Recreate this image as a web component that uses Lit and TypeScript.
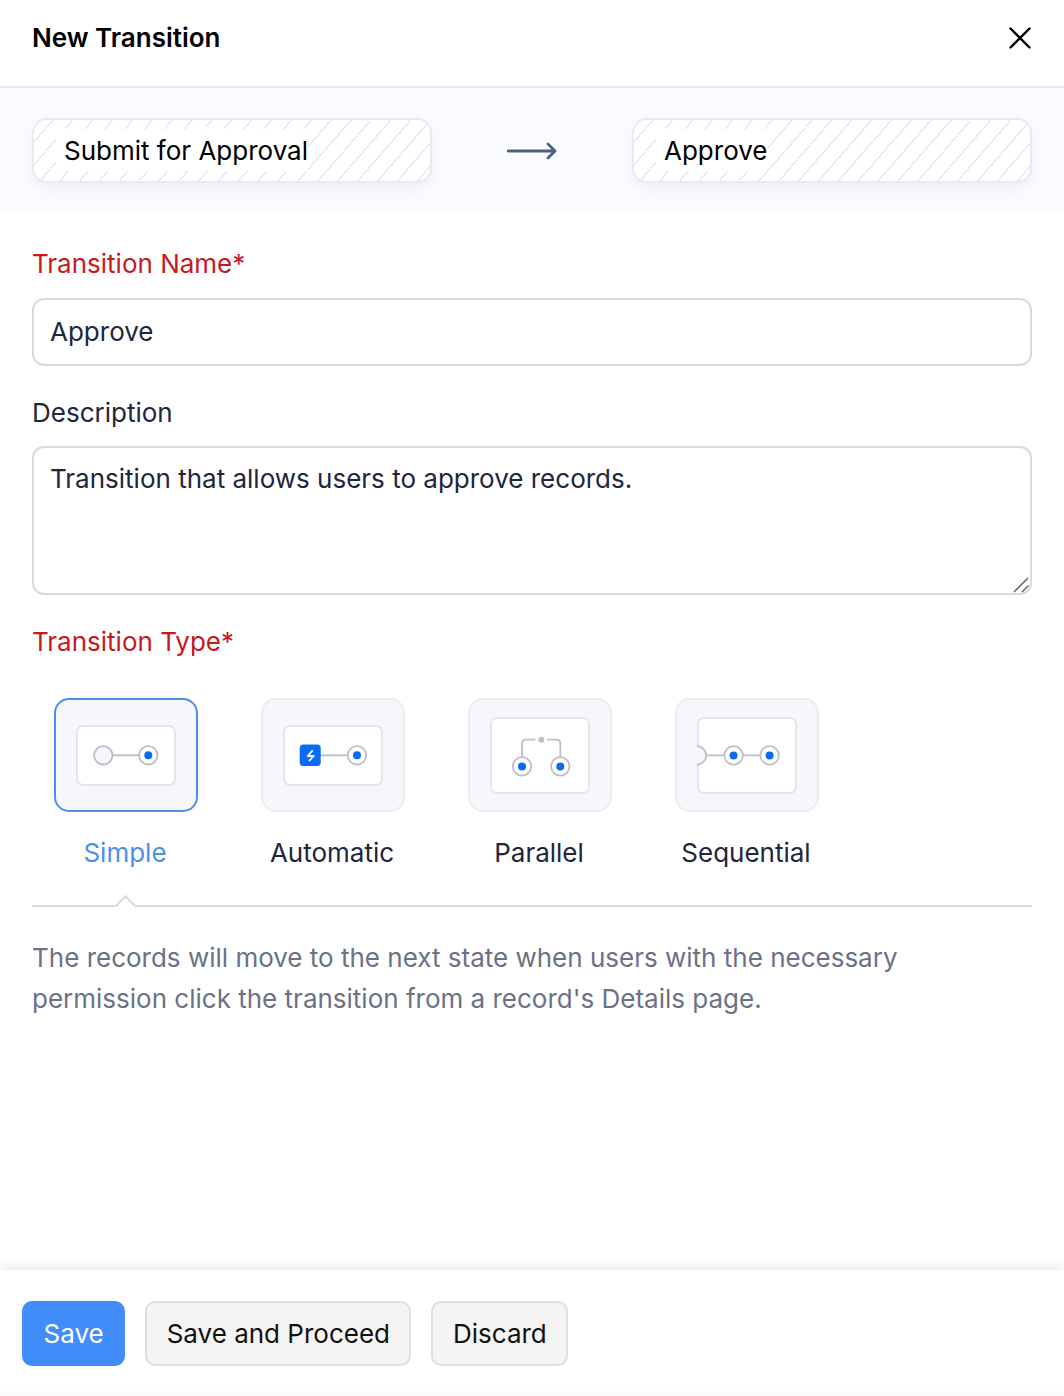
import { LitElement, html, css, svg } from "lit";
import { customElement } from "lit/decorators.js";

const LINE = "#bdbdcb";
const BLUE = "#0a6cf5";

const node = (x: number, y: number) => svg`
  <circle cx=${x} cy=${y} r="9.2" fill="#fff" stroke=${LINE} stroke-width="1.8"></circle>
  <circle cx=${x} cy=${y} r="4" fill=${BLUE}></circle>
`;

const types = [
  {
    name: "Simple",
    h: 61,
    art: svg`
      <path d="M36 29.3H62" stroke=${LINE} stroke-width="1.8"></path>
      <circle cx="26.3" cy="29.3" r="9.2" fill="#f6f6fb" stroke=${LINE} stroke-width="1.8"></circle>
      ${node(71.3, 29.3)}
    `,
  },
  {
    name: "Automatic",
    h: 61,
    art: svg`
      <path d="M36 29.3H64" stroke=${LINE} stroke-width="1.8"></path>
      <rect x="15.7" y="18.5" width="21" height="21.6" rx="3.5" fill=${BLUE}></rect>
      <path d="M28.7 24.3L23.7 30H29.7L25 35" fill="none" stroke="#fff" stroke-width="1.8" stroke-linejoin="round"></path>
      ${node(73, 29.3)}
    `,
  },
  {
    name: "Parallel",
    h: 77,
    art: svg`
      <path d="M31 40V25.700Q31 21.700 35 21.700H44.300M56 21.700H65.300Q69.300 21.700 69.300 25.700V40" fill="none" stroke=${LINE} stroke-width="1.8"></path>
      <circle cx="50.3" cy="21.7" r="3" fill=${LINE}></circle>
      ${node(31, 48.4)}${node(69.3, 48.4)}
    `,
  },
  {
    name: "Sequential",
    h: 77,
    art: svg`
      <path d="M9 37.4H72" stroke=${LINE} stroke-width="1.8"></path>
      <circle cx="-1" cy="37.4" r="9.2" fill="#f6f6fb" stroke=${LINE} stroke-width="1.8"></circle>
      ${node(35.6, 37.4)}${node(71.6, 37.4)}
    `,
  },
];

@customElement("app-root")
export class AppRoot extends LitElement {
  static styles = css`
    :host {
      display: block;
      width: 1064px;
      height: 1396px;
      background: #fff;
      color: #21263c;
      font-family: Inter, "Noto Sans", sans-serif;
      font-size: 26px;
      line-height: 34px;
    }
    .page {
      display: flex;
      flex-direction: column;
      height: 100%;
    }
    .head {
      display: flex;
      align-items: center;
      justify-content: space-between;
      box-sizing: content-box;
      height: 76px;
      padding: 0 32px 10px;
      border-bottom: 2px solid #e9e9f1;
      font-weight: 600;
      color: #000;
    }
    .close {
      display: block;
    }
    .states {
      display: flex;
      align-items: center;
      justify-content: space-between;
      height: 124px;
      box-sizing: border-box;
      padding: 0 32px;
      background: #fafbff;
    }
    .arrow {
      margin-top: 2px;
    }
    .chip {
      display: flex;
      align-items: center;
      box-sizing: border-box;
      width: 400px;
      height: 65px;
      padding-left: 22px;
      border: 2px solid #e9e9f3;
      border-radius: 15px;
      background-color: #fff;
      background-image: repeating-linear-gradient(
        131deg,
        transparent 0 13.6px,
        #e6e8f1 13.6px 15px
      );
      box-shadow: 0 6px 14px rgba(90, 100, 140, 0.07);
      color: #000;
    }
    .chip span {
      padding: 5px 0 3px 8px;
      background: #fff;
    }
    .form {
      padding: 35px 32px 0;
    }
    .label.req {
      color: #c8181e;
    }
    .field {
      display: block;
      box-sizing: border-box;
      width: 100%;
      margin: 17px 0 30px;
      padding: 0 16px 2px;
      height: 68px;
      border: 2px solid #d9d9e5;
      border-radius: 12px;
      background: #fff;
      color: #21263c;
      font: inherit;
      outline: none;
    }
    .area {
      position: relative;
      margin: 16px 0 30px;
    }
    textarea.field {
      height: 149px;
      margin: 0;
      padding-top: 14px;
      resize: none;
    }
    .grip {
      position: absolute;
      right: 0;
      bottom: 0;
    }
    .types {
      display: flex;
      gap: 63px;
      margin: 39px 0 0 22px;
    }
    .type {
      width: 144px;
      text-align: center;
      white-space: nowrap;
    }
    .name {
      margin-right: 2px;
    }
    .card {
      display: flex;
      align-items: center;
      justify-content: center;
      box-sizing: border-box;
      height: 114px;
      margin-bottom: 24px;
      border: 2px solid #ececf3;
      border-radius: 15px;
      background: #f6f7fb;
    }
    .card svg {
      display: block;
    }
    .type.on .card {
      border-color: #4a90ee;
    }
    .type.on {
      color: #4a90ee;
    }
    .rule {
      position: relative;
      height: 2px;
      margin-top: 35px;
      background: #d9d9e5;
    }
    .notch {
      position: absolute;
      left: 86px;
      top: -7px;
      width: 15px;
      height: 15px;
      box-sizing: border-box;
      background: #fff;
      border-top: 2px solid #d9d9e5;
      border-left: 2px solid #d9d9e5;
      transform: rotate(45deg);
    }
    .note {
      margin: 30px 0 0;
      line-height: 41px;
      color: #6b7187;
    }
    .foot {
      display: flex;
      gap: 20px;
      margin-top: auto;
      padding: 31px 22px 30px;
      background: #fff;
      box-shadow: 0 -4px 10px rgba(30, 30, 50, 0.08), inset 0 -7px 7px -6px rgba(30, 30, 50, 0.05);
    }
    button {
      box-sizing: border-box;
      height: 65px;
      padding: 0 19.5px;
      border: 2px solid #dfdfdf;
      border-radius: 10px;
      background: #f4f4f4;
      color: #111;
      font: inherit;
    }
    button.primary {
      border-color: #408dfb;
      background: #408dfb;
      color: #fff;
    }
  `;

  render() {
    return html`
      <div class="page">
        <header class="head">
          <span>New Transition</span>
          <svg class="close" width="24" height="24" viewBox="0 0 24 24">
            <path d="M2.5 2.5L21.5 21.5M21.5 2.5L2.5 21.5" stroke="#000" stroke-width="2.4" stroke-linecap="round"></path>
          </svg>
        </header>

        <section class="states">
          <div class="chip"><span>Submit for Approval</span></div>
          <svg class="arrow" width="50" height="20" viewBox="0 0 50 20">
            <path d="M1 10H48M41 3L48 10L41 17" fill="none" stroke="#4f607e" stroke-width="2.8" stroke-linecap="round" stroke-linejoin="round"></path>
          </svg>
          <div class="chip"><span>Approve</span></div>
        </section>

        <section class="form">
          <div class="label req">Transition Name*</div>
          <input class="field" .value=${"Approve"} />
          <div class="label">Description</div>
          <div class="area">
            <textarea class="field" .value=${"Transition that allows users to approve records."}></textarea>
            <svg class="grip" width="20" height="20" viewBox="0 0 20 20">
              <path d="M2 17L16 3M10 17L16.500 10.500" stroke="#6e6e6e" stroke-width="1.6"></path>
            </svg>
          </div>
          <div class="label req">Transition Type*</div>
          <div class="types">
            ${types.map(
              (t, i) => html`
                <div class="type ${i === 0 ? "on" : ""}">
                  <div class="card">
                    <svg width="100" height=${t.h} viewBox="-1 -1 100 ${t.h}">
                      <rect x="0" y="0" width="98" height=${t.h - 2} rx="6" fill="#fff" stroke="#e5e5ee" stroke-width="2"></rect>
                      ${t.art}
                    </svg>
                  </div>
                  <div class="name">${t.name}</div>
                </div>
              `
            )}
          </div>
          <div class="rule"><div class="notch"></div></div>
          <p class="note">
            The records will move to the next state when users with the necessary<br />
            permission click the transition from a record's Details page.
          </p>
        </section>

        <footer class="foot">
          <button class="primary">Save</button>
          <button>Save and Proceed</button>
          <button>Discard</button>
        </footer>
      </div>
    `;
  }
}
